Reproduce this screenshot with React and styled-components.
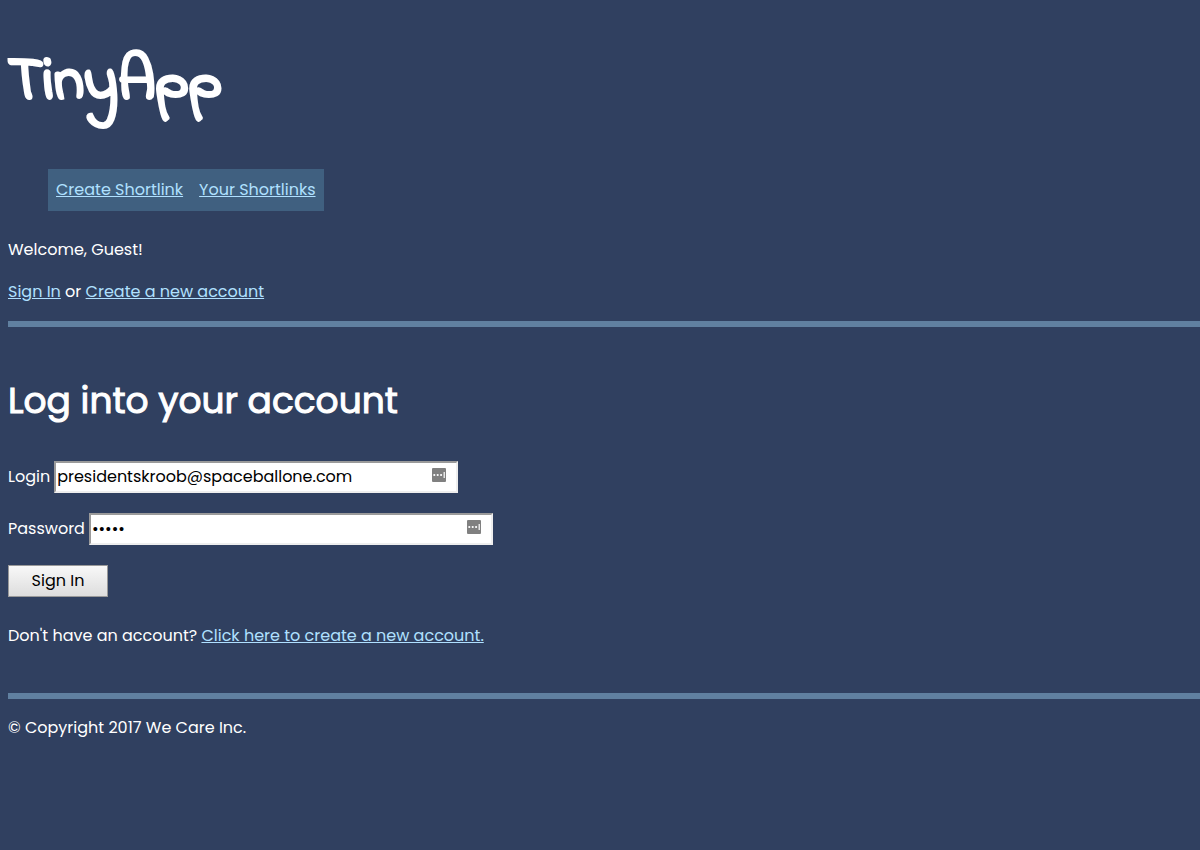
import React from 'react';
import styled, { createGlobalStyle } from 'styled-components';

const GlobalStyle = createGlobalStyle`
  body {
    margin: 0;
    background: #304060;
    color: #ffffff;
    font-family: Poppins, Inter, "Liberation Sans", sans-serif;
    font-size: 16px;
    line-height: 26px;
  }
`;

const Page = styled.div`
  padding: 44px 0 40px 8px;
`;

const Logo = styled.h1`
  margin: 0;
  font-family: "Indie Flower", Inter, "Liberation Sans", sans-serif;
  font-size: 61px;
  line-height: 80px;
  font-weight: 700;
  -webkit-text-stroke: 2px #ffffff;
`;

const Nav = styled.nav`
  display: flex;
  gap: 16px;
  width: fit-content;
  margin: 45px 0 26px 40px;
  padding: 8px;
  background: #406080;
`;

const Link = styled.a`
  color: #b0e0ff;
  text-decoration: underline;
`;

const Text = styled.p`
  margin: 0 0 16px;
`;

const Rule = styled.hr`
  height: 6px;
  margin: 0;
  border: 0;
  background: #6080a0;
`;

const Main = styled.main`
  padding: 44px 0 28px;
`;

const Heading = styled.h2`
  margin: 0 0 30px;
  font-size: 36px;
  line-height: 60px;
  font-weight: 400;
  -webkit-text-stroke: 1px #ffffff;
`;

const Form = styled.form`
  display: flex;
  flex-direction: column;
  align-items: flex-start;
  gap: 20px;
  margin-bottom: 26px;
`;

const Field = styled.div`
  display: flex;
  align-items: center;
  gap: 4px;
`;

const InputWrap = styled.div`
  position: relative;
  width: 404px;
`;

const Input = styled.input`
  display: block;
  box-sizing: border-box;
  width: 100%;
  height: 32px;
  padding: 0 1px 2px;
  border: 2px solid;
  border-color: #9a9a9a #eeeeee #eeeeee #9a9a9a;
  background: #ffffff;
  color: #000000;
  font: inherit;
`;

const FillIcon = styled.svg`
  position: absolute;
  top: 7px;
  right: 12px;
`;

const Button = styled.button`
  width: 100px;
  height: 32px;
  padding: 0;
  border: 1px solid #999999;
  background: linear-gradient(#f8f8f8, #dddddd);
  color: #000000;
  font: inherit;
`;

const Footer = styled.footer`
  padding-top: 16px;
`;

function FormField({ id, label, ...input }) {
  return (
    <Field>
      <label htmlFor={id}>{label}</label>
      <InputWrap>
        <Input id={id} {...input} />
        <FillIcon width="14" height="14" viewBox="0 0 14 14" aria-hidden="true">
          <rect width="14" height="14" rx="1" fill="#808080" />
          <circle cx="2.3" cy="7" r="1.1" fill="#ffffff" />
          <circle cx="5.7" cy="7" r="1.1" fill="#ffffff" />
          <circle cx="9.1" cy="7" r="1.1" fill="#ffffff" />
          <rect x="11.6" y="4" width="1.2" height="6" fill="#ffffff" />
        </FillIcon>
      </InputWrap>
    </Field>
  );
}

export default function App() {
  return (
    <>
      <GlobalStyle />
      <Page>
        <header>
          <Logo>TinyApp</Logo>
          <Nav>
            <Link href="#create">Create Shortlink</Link>
            <Link href="#links">Your Shortlinks</Link>
          </Nav>
          <Text>Welcome, Guest!</Text>
          <Text>
            <Link href="#login">Sign In</Link> or <Link href="#register">Create a new account</Link>
          </Text>
        </header>
        <Rule />
        <Main>
          <Heading>Log into your account</Heading>
          <Form onSubmit={(event) => event.preventDefault()}>
            <FormField id="login" label="Login" type="text" defaultValue="presidentskroob@spaceballone.com" />
            <FormField id="password" label="Password" type="password" defaultValue="12345" />
            <Button type="submit">Sign In</Button>
          </Form>
          <Text>
            Don't have an account? <Link href="#register">Click here to create a new account.</Link>
          </Text>
        </Main>
        <Rule />
        <Footer>
          <Text>© Copyright 2017 We Care Inc.</Text>
        </Footer>
      </Page>
    </>
  );
}
